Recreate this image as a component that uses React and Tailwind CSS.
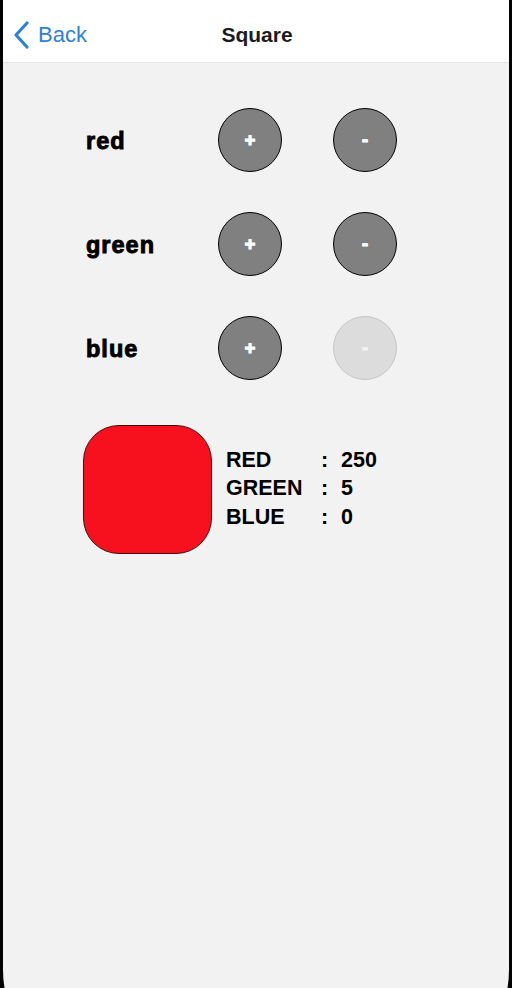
import React from "react";

const rows = [
  { name: "red", minusOn: true },
  { name: "green", minusOn: true },
  { name: "blue", minusOn: false },
];

function RoundButton({ label, enabled }) {
  return (
    <button
      type="button"
      className={
        "w-16 h-16 rounded-full flex items-center justify-center text-[18px] font-bold leading-none [-webkit-text-stroke:1.2px_currentColor] " +
        (enabled
          ? "bg-[#808080] border border-black text-white"
          : "bg-[#dcdcdc] border border-[#c6c6c6] text-[#f2f2f2]")
      }
    >
      {label}
    </button>
  );
}

export default function App() {
  return (
    <div
      className="h-[988px] w-[512px] bg-black overflow-hidden px-[3px]"
      style={{ fontFamily: '"Liberation Sans", Arial, sans-serif' }}
    >
      <div className="h-[1080px] bg-[#f2f2f2] rounded-b-[110px] rounded-t-[10px] flex flex-col">
        {/* nav bar */}
        <div className="h-[63px] pt-[8px] bg-white border-b border-[#e6e6e6] flex items-center relative">
          <div className="flex items-center pl-[10px] gap-[8px] text-[#2f80dc]">
            <svg width="18" height="28" viewBox="0 0 18 28" fill="none">
              <path
                d="M14 2 L3 14 L14 26"
                stroke="currentColor"
                strokeWidth="3.2"
                strokeLinecap="round"
                strokeLinejoin="round"
              />
            </svg>
            <span className="text-[22px] leading-none -ml-[1px]">Back</span>
          </div>
          <div className="absolute inset-0 pt-[8px] flex items-center justify-center pointer-events-none">
            <span className="text-[21px] font-bold text-[#1c1c1c] pl-[2px]">Square</span>
          </div>
        </div>

        {/* controls */}
        <div className="pt-[45px] pl-[80px] flex flex-col gap-10">
          {rows.map((r) => (
            <div key={r.name} className="flex items-center">
              <span className="w-[135px] pl-[3px] pt-[3px] text-[23.5px] font-bold text-black leading-none tracking-[1px] [-webkit-text-stroke:0.9px_black]">
                {r.name}
              </span>
              <div className="flex gap-[51px]">
                <RoundButton label="+" enabled />
                <RoundButton label="-" enabled={r.minusOn} />
              </div>
            </div>
          ))}

          <div className="flex items-center mt-[5px]">
            <div className="w-[129px] h-[129px] rounded-[36px] bg-[#f7111e] border border-[#4a0a0a]" />
            <div className="ml-[14px] text-[21.5px] font-bold text-black leading-[28.5px] -mt-[2px]">
              <div className="flex">
                <span className="w-[95px]">RED</span>
                <span className="w-[20px]">:</span>
                <span>250</span>
              </div>
              <div className="flex">
                <span className="w-[95px]">GREEN</span>
                <span className="w-[20px]">:</span>
                <span>5</span>
              </div>
              <div className="flex">
                <span className="w-[95px]">BLUE</span>
                <span className="w-[20px]">:</span>
                <span>0</span>
              </div>
            </div>
          </div>
        </div>
      </div>
    </div>
  );
}
